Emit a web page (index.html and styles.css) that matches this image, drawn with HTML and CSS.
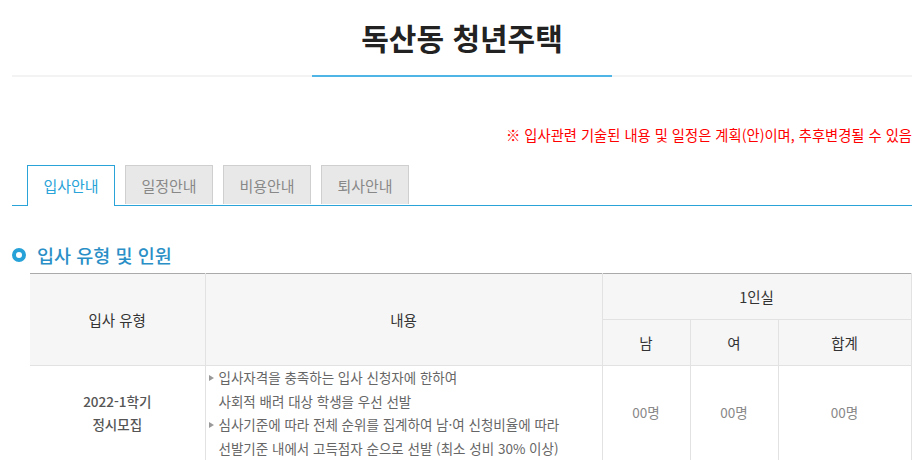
FILE: index.html
```html
<!DOCTYPE html>
<html lang="ko">
<head>
    <meta charset="UTF-8">
    <meta name="viewport" content="width=device-width, initial-scale=1.0">
    <title>독산동 청년주택</title>
    <link rel="stylesheet" href="styles.css">
</head>
<body>
    <div class="wrap">
        <!-- 페이지 제목 -->
        <div class="page-head">
            <h1 class="page-title">독산동 청년주택</h1>
        </div>

        <p class="notice">※ 입사관련 기술된 내용 및 일정은 계획(안)이며, 추후변경될 수 있음</p>

        <!-- 탭 메뉴 -->
        <ul class="tabs">
            <li class="tab active">입사안내</li>
            <li class="tab">일정안내</li>
            <li class="tab">비용안내</li>
            <li class="tab">퇴사안내</li>
        </ul>

        <h2 class="sec-title"><span class="dot"></span>입사 유형 및 인원</h2>

        <table class="info-table">
            <colgroup>
                <col class="c-type">
                <col class="c-desc">
                <col class="c-num">
                <col class="c-num">
                <col class="c-sum">
            </colgroup>
            <thead>
                <tr>
                    <th rowspan="2">입사 유형</th>
                    <th rowspan="2">내용</th>
                    <th colspan="3">1인실</th>
                </tr>
                <tr>
                    <th>남</th>
                    <th>여</th>
                    <th>합계</th>
                </tr>
            </thead>
            <tbody>
                <tr>
                    <td class="type">2022-1학기<br>정시모집</td>
                    <td class="desc">
                        <ul class="bullets">
                            <li>입사자격을 충족하는 입사 신청자에 한하여<br>사회적 배려 대상 학생을 우선 선발</li>
                            <li>심사기준에 따라 전체 순위를 집계하여 남·여 신청비율에 따라<br>선발기준 내에서 고득점자 순으로 선발 (최소 성비 30% 이상)</li>
                        </ul>
                    </td>
                    <td class="num">00명</td>
                    <td class="num">00명</td>
                    <td class="num">00명</td>
                </tr>
            </tbody>
        </table>
    </div>
</body>
</html>
```

FILE: styles.css
```css
html, body {
    margin: 0;
    padding: 0;
    background: #fff;
    font-family: "Noto Sans CJK KR", "Noto Sans", sans-serif;
    color: #333;
}

.wrap {
    width: 900px;
    margin-left: 12px;
}

/* 제목 */
.page-head {
    border-bottom: 2px solid #f3f3f3;
}

.page-title {
    width: 300px;
    margin: 0 auto -2px;
    padding: 17px 0 18px;
    border-bottom: 2px solid #4fb5e6;
    font-size: 30px;
    line-height: 40px;
    font-weight: 700;
    color: #222;
    text-align: center;
}

.notice {
    margin: 48px 0 0;
    font-size: 14.3px;
    line-height: 20px;
    color: #ff0000;
    text-align: right;
}

/* 탭 */
.tabs {
    display: flex;
    gap: 10px;
    list-style: none;
    margin: 20px 0 0;
    padding: 0 0 0 15px;
    border-bottom: 1px solid #29a3d8;
}

.tab {
    width: 88px;
    height: 39px;
    box-sizing: border-box;
    border: 1px solid #cfcfcf;
    border-bottom: none;
    background: #e8e8e8;
    color: #888;
    font-size: 15px;
    line-height: 40px;
    text-align: center;
}

.tab.active {
    height: 41px;
    margin-bottom: -1px;
    border-color: #29a3d8;
    background: #fff;
    color: #29a3d8;
}

/* 섹션 제목 */
.sec-title {
    display: flex;
    align-items: center;
    gap: 11px;
    margin: 36px 0 0;
    font-size: 18.5px;
    line-height: 26px;
    font-weight: 500;
    color: #2a8fc6;
}

.dot {
    width: 6px;
    height: 6px;
    border: 4px solid #27a2d8;
    border-radius: 50%;
}

/* 표 */
.info-table {
    width: 881px;
    margin: 5px 0 0 18px;
    border-collapse: collapse;
    border-top: 1px solid #aaa;
    table-layout: fixed;
}

.c-type { width: 175px; }
.c-desc { width: 397px; }
.c-num { width: 88px; }
.c-sum { width: 133px; }

.info-table th {
    height: 45px;
    padding: 0;
    background: #f6f6f6;
    border-right: 1px solid #e2e2e2;
    border-bottom: 1px solid #e2e2e2;
    font-size: 14.5px;
    font-weight: 400;
    color: #333;
}

.info-table td {
    padding: 0;
    border-right: 1px solid #e2e2e2;
    border-bottom: 1px solid #e2e2e2;
    font-size: 13.5px;
    line-height: 23.5px;
    color: #666;
    text-align: center;
    vertical-align: middle;
}

.info-table td.type {
    color: #555;
    font-weight: 500;
}

.info-table td.num {
    color: #888;
}

.info-table td.desc {
    text-align: left;
}

.bullets {
    list-style: none;
    margin: 0;
    padding: 0 0 0 3px;
}

.bullets li {
    position: relative;
    padding-left: 10px;
}

.bullets li::before {
    content: "";
    position: absolute;
    left: 0;
    top: 9px;
    border-left: 5px solid #999;
    border-top: 3px solid transparent;
    border-bottom: 3px solid transparent;
}
```
